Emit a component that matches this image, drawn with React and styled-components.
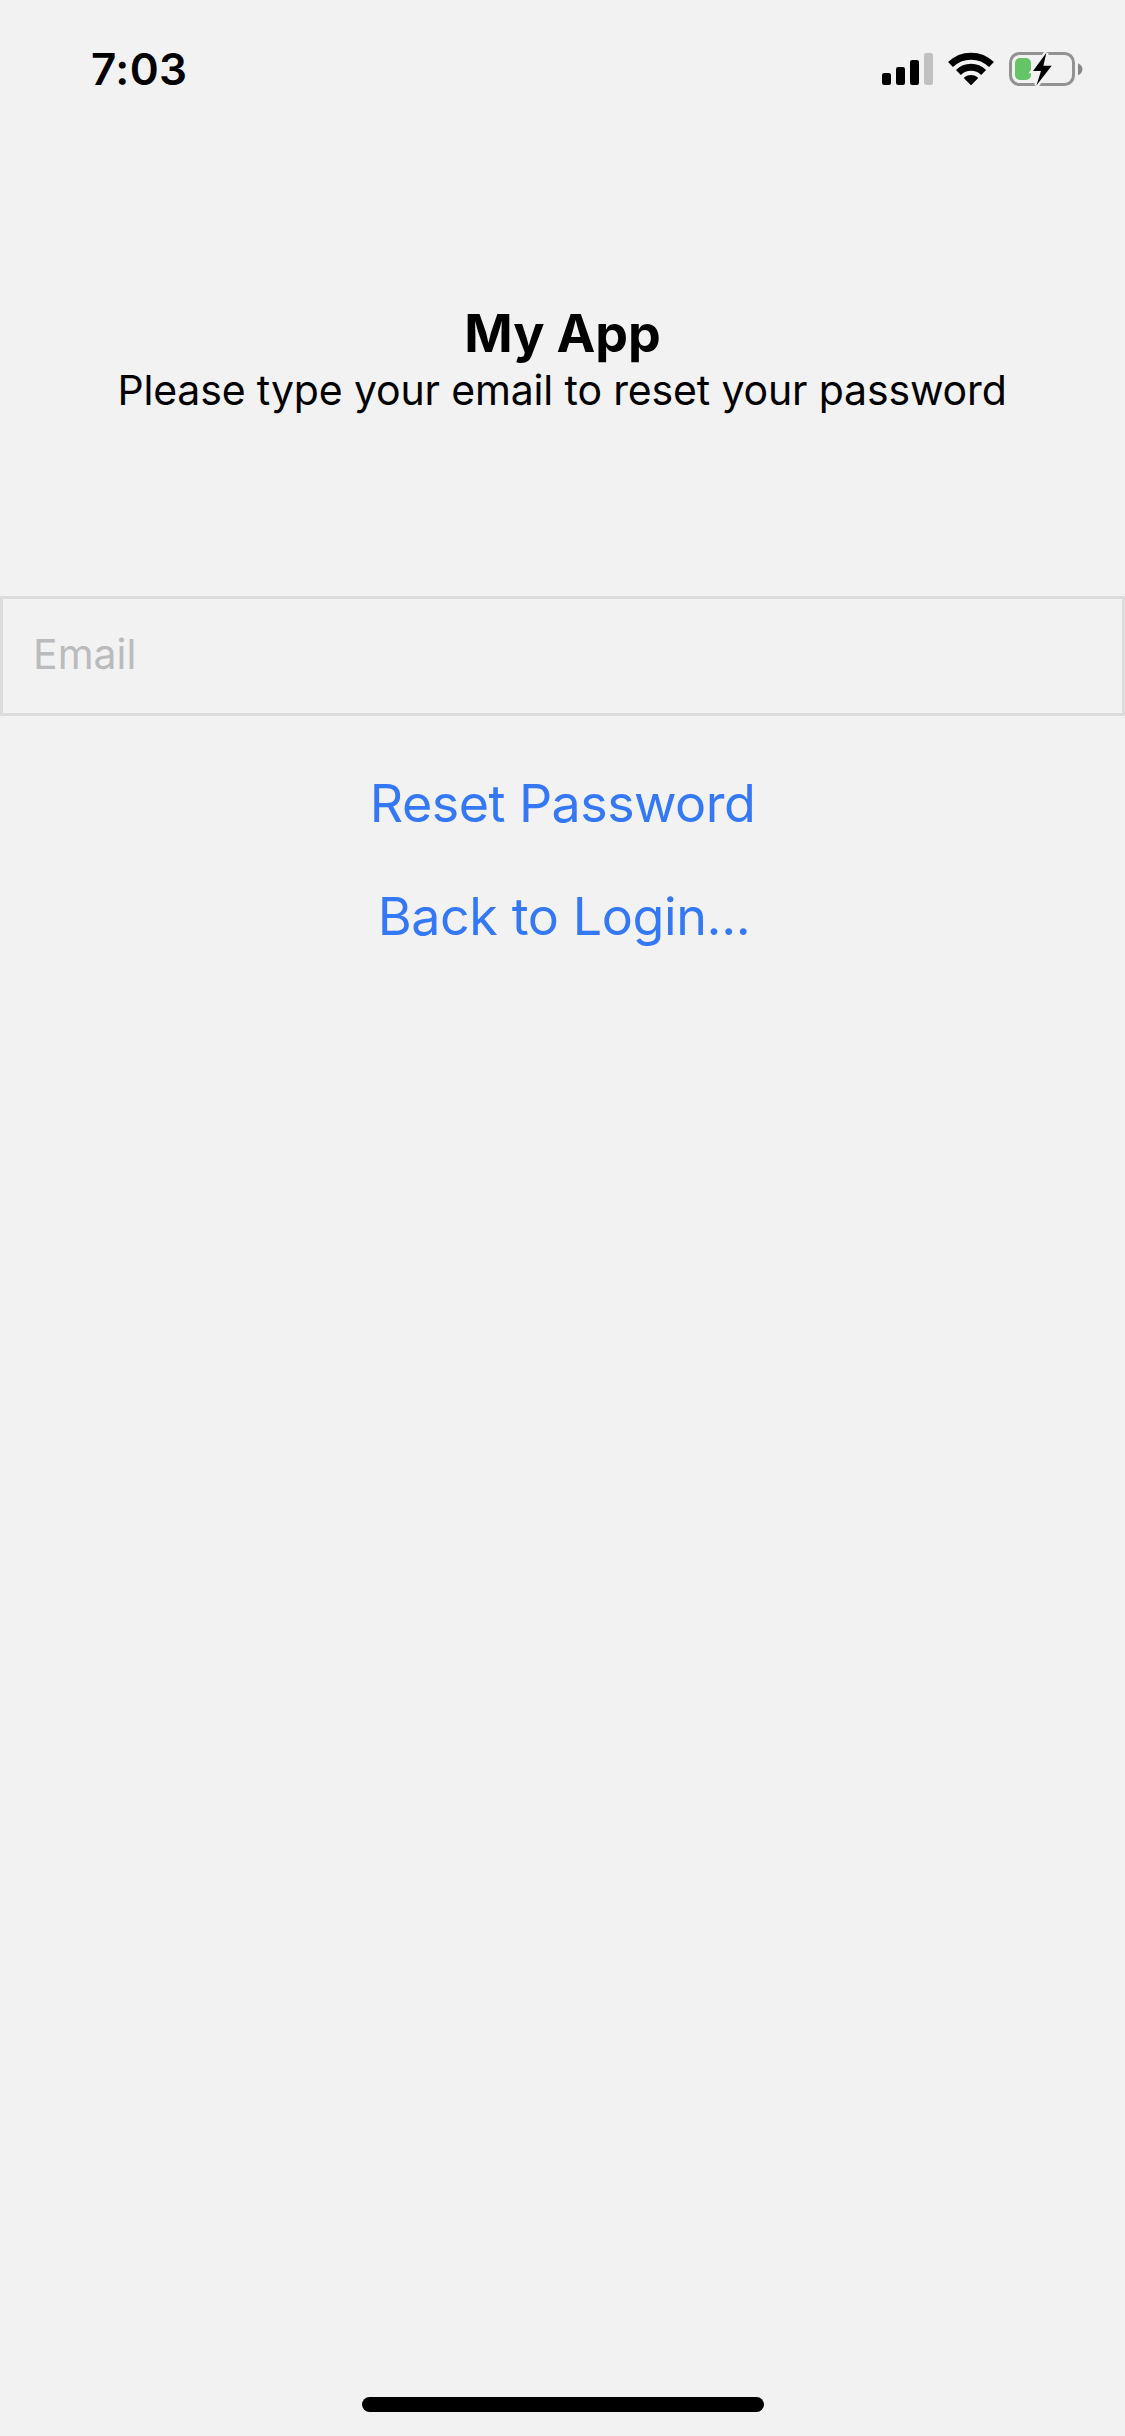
import React from "react";
import styled, { createGlobalStyle } from "styled-components";

const BG = "#f2f2f2";

const GlobalStyle = createGlobalStyle`
  *, *::before, *::after { box-sizing: border-box; }
  body {
    margin: 0;
    background: ${BG};
    color: #000;
    font-family: Inter, "Liberation Sans", sans-serif;
  }
`;

const Screen = styled.div`
  display: flex;
  flex-direction: column;
  width: 1125px;
  height: 2436px;
  background: ${BG};
`;

const StatusBar = styled.header`
  display: flex;
  justify-content: space-between;
  align-items: flex-start;
  height: 132px;
  padding: 42px 42px 0 91px;
`;

const Time = styled.span`
  font-size: 44px;
  font-weight: 600;
  line-height: 54px;
  letter-spacing: 0.4px;
`;

const StatusIcons = styled.div`
  display: flex;
  padding-top: 10px;
`;

const SignalIcon = styled.svg`
  display: block;
  width: 51px;
  height: 34px;
  margin-right: 14px;
`;

const WifiIcon = styled.svg`
  display: block;
  width: 48px;
  height: 34px;
  margin-right: 14px;
`;

const BatteryIcon = styled.svg`
  display: block;
  width: 74px;
  height: 34px;
`;

const Header = styled.div`
  display: flex;
  flex-direction: column;
  align-items: center;
  padding-top: 170px;
`;

const Title = styled.h1`
  margin: 0;
  font-size: 52px;
  font-weight: 700;
  line-height: 63px;
  letter-spacing: -0.1px;
`;

const Subtitle = styled.p`
  margin: 0 1px 0 0;
  font-size: 41px;
  line-height: 50px;
  letter-spacing: -0.15px;
`;

const EmailInput = styled.input`
  display: block;
  width: 100%;
  height: 120px;
  margin: 181px 0 31px;
  padding: 0 30px 4px;
  border: 3px solid #dcdcdc;
  border-radius: 0;
  outline: none;
  background: transparent;
  font-family: inherit;
  font-size: 41px;
  line-height: 50px;

  &::placeholder {
    color: #bbbbbd;
    opacity: 1;
  }
`;

const LinkButton = styled.button`
  height: 113px;
  padding: 25px 0;
  border: 0;
  background: none;
  color: #3478f6;
  font-family: inherit;
  font-size: 52px;
  line-height: 63px;
  letter-spacing: ${(p) => p.$tracking}px;
  text-indent: ${(p) => p.$indent || 0}px;
`;

const HomeIndicator = styled.div`
  width: 402px;
  height: 15px;
  margin: auto auto 24px 362px;
  border-radius: 8px;
  background: #000;
`;

const BOLT = "M37.4 0.8 24 19H32L27.4 33.6 42.7 13.8H34.4Z";

function Signal() {
  return (
    <SignalIcon viewBox="0 0 51 34">
      <rect x="0" y="21" width="9" height="12" rx="2.2" />
      <rect x="14" y="15" width="9" height="18" rx="2.2" />
      <rect x="28" y="8" width="9" height="25" rx="2.2" />
      <rect x="42" y="1" width="9" height="32" rx="2.2" fill="#c1c1c1" />
    </SignalIcon>
  );
}

function Wifi() {
  return (
    <WifiIcon viewBox="0 0 48 34">
      <g fill="none" stroke="#000" strokeWidth="7">
        <path d="M3.5 12.6A29.2 29.2 0 0 1 44.5 12.6" />
        <path d="M11.4 20.5A18 18 0 0 1 36.6 20.5" />
      </g>
      <path d="M24 33.2 17.2 26.4Q16.8 25.7 17.4 25.3A10.4 10.4 0 0 1 30.6 25.3Q31.2 25.7 30.8 26.4Z" />
    </WifiIcon>
  );
}

function Battery() {
  return (
    <BatteryIcon viewBox="0 0 74 34">
      <rect x="1.5" y="1.5" width="63" height="31" rx="9" fill="none" stroke="#929292" strokeWidth="3" />
      <path d="M69 11.2Q73.4 13.2 73.4 17.2T69 23.2Z" fill="#868686" />
      <rect x="6" y="6" width="16" height="22" rx="5" fill="#65c466" />
      <path d={BOLT} fill={BG} stroke={BG} strokeWidth="4.6" />
      <path d={BOLT} />
    </BatteryIcon>
  );
}

export default function App() {
  return (
    <Screen>
      <GlobalStyle />
      <StatusBar>
        <Time>7:03</Time>
        <StatusIcons>
          <Signal />
          <Wifi />
          <Battery />
        </StatusIcons>
      </StatusBar>
      <Header>
        <Title>My App</Title>
        <Subtitle>Please type your email to reset your password</Subtitle>
      </Header>
      <EmailInput type="email" placeholder="Email" />
      <LinkButton $tracking={-0.55}>Reset Password</LinkButton>
      <LinkButton $tracking={-0.4} $indent={3}>Back to Login...</LinkButton>
      <HomeIndicator />
    </Screen>
  );
}
